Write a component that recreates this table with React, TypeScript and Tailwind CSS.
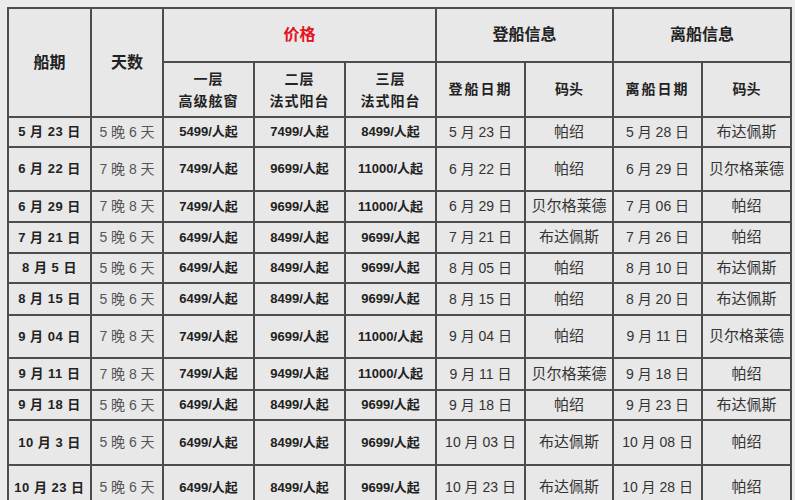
const rows = [
  { h: 30, date: '5 月 23 日', days: '5 晚 6 天', p1: '5499/人起', p2: '7499/人起', p3: '8499/人起', on: '5 月 23 日', onPort: '帕绍', off: '5 月 28 日', offPort: '布达佩斯' },
  { h: 44, date: '6 月 22 日', days: '7 晚 8 天', p1: '7499/人起', p2: '9699/人起', p3: '11000/人起', on: '6 月 22 日', onPort: '帕绍', off: '6 月 29 日', offPort: '贝尔格莱德' },
  { h: 31, date: '6 月 29 日', days: '7 晚 8 天', p1: '7499/人起', p2: '9699/人起', p3: '11000/人起', on: '6 月 29 日', onPort: '贝尔格莱德', off: '7 月 06 日', offPort: '帕绍' },
  { h: 31, date: '7 月 21 日', days: '5 晚 6 天', p1: '6499/人起', p2: '8499/人起', p3: '9699/人起', on: '7 月 21 日', onPort: '布达佩斯', off: '7 月 26 日', offPort: '帕绍' },
  { h: 30, date: '8 月 5 日', days: '5 晚 6 天', p1: '6499/人起', p2: '8499/人起', p3: '9699/人起', on: '8 月 05 日', onPort: '帕绍', off: '8 月 10 日', offPort: '布达佩斯' },
  { h: 32, date: '8 月 15 日', days: '5 晚 6 天', p1: '6499/人起', p2: '8499/人起', p3: '9699/人起', on: '8 月 15 日', onPort: '帕绍', off: '8 月 20 日', offPort: '布达佩斯' },
  { h: 43, date: '9 月 04 日', days: '7 晚 8 天', p1: '7499/人起', p2: '9699/人起', p3: '11000/人起', on: '9 月 04 日', onPort: '帕绍', off: '9 月 11 日', offPort: '贝尔格莱德' },
  { h: 32, date: '9 月 11 日', days: '7 晚 8 天', p1: '7499/人起', p2: '9499/人起', p3: '11000/人起', on: '9 月 11 日', onPort: '贝尔格莱德', off: '9 月 18 日', offPort: '帕绍' },
  { h: 30, date: '9 月 18 日', days: '5 晚 6 天', p1: '6499/人起', p2: '8499/人起', p3: '9699/人起', on: '9 月 18 日', onPort: '帕绍', off: '9 月 23 日', offPort: '布达佩斯' },
  { h: 45, date: '10 月 3 日', days: '5 晚 6 天', p1: '6499/人起', p2: '8499/人起', p3: '9699/人起', on: '10 月 03 日', onPort: '布达佩斯', off: '10 月 08 日', offPort: '帕绍' },
  { h: 45, date: '10 月 23 日', days: '5 晚 6 天', p1: '6499/人起', p2: '8499/人起', p3: '9699/人起', on: '10 月 23 日', onPort: '布达佩斯', off: '10 月 28 日', offPort: '帕绍' },
];

const cell = 'border-2 border-[#4d4d4d] text-center align-middle p-0';
const font = { fontFamily: '"Liberation Sans", "Noto Sans CJK SC", sans-serif' };

export default function App() {
  return (
    <div className="w-[795px] h-[500px] overflow-hidden bg-[#ebebeb] pl-[7px] pt-[7px]" style={font}>
      <table className="table-fixed border-collapse bg-[#e8e8e8] w-[783px] text-[#222]">
        <colgroup>
          <col className="w-[83px]" />
          <col className="w-[72px]" />
          <col className="w-[91px]" />
          <col className="w-[91px]" />
          <col className="w-[91px]" />
          <col className="w-[89px]" />
          <col className="w-[88px]" />
          <col className="w-[89px]" />
          <col className="w-[89px]" />
        </colgroup>
        <thead>
          <tr className="h-[54px]">
            <th rowSpan={2} className={`${cell} text-[16px] font-bold`}>船期</th>
            <th rowSpan={2} className={`${cell} text-[16px] font-bold`}>天数</th>
            <th colSpan={3} className={`${cell} text-[16px] font-bold text-[#e3141f]`}>价格</th>
            <th colSpan={2} className={`${cell} text-[16px] font-bold`}>登船信息</th>
            <th colSpan={2} className={`${cell} text-[16px] font-bold`}>离船信息</th>
          </tr>
          <tr className="h-[55px]">
            <th className={`${cell} text-[14px] font-bold leading-[22px] tracking-[1px]`}>一层<br />高级舷窗</th>
            <th className={`${cell} text-[14px] font-bold leading-[22px] tracking-[1px]`}>二层<br />法式阳台</th>
            <th className={`${cell} text-[14px] font-bold leading-[22px] tracking-[1px]`}>三层<br />法式阳台</th>
            <th className={`${cell} text-[14px] font-bold tracking-[2px]`}>登船日期</th>
            <th className={`${cell} text-[14px] font-bold`}>码头</th>
            <th className={`${cell} text-[14px] font-bold tracking-[2px]`}>离船日期</th>
            <th className={`${cell} text-[14px] font-bold`}>码头</th>
          </tr>
        </thead>
        <tbody>
          {rows.map((r, i) => (
            <tr key={i} style={{ height: r.h }}>
              <td className={`${cell} text-[13px] font-bold whitespace-nowrap tracking-[0.5px]`}>{r.date}</td>
              <td className={`${cell} text-[14px] text-[#555] whitespace-nowrap`}>{r.days}</td>
              <td className={`${cell} text-[13px] font-bold`}>{r.p1}</td>
              <td className={`${cell} text-[13px] font-bold`}>{r.p2}</td>
              <td className={`${cell} text-[13px] font-bold`}>{r.p3}</td>
              <td className={`${cell} text-[14px] text-[#333] whitespace-nowrap`}>{r.on}</td>
              <td className={`${cell} text-[15px] text-[#333]`}>{r.onPort}</td>
              <td className={`${cell} text-[14px] text-[#333] whitespace-nowrap`}>{r.off}</td>
              <td className={`${cell} text-[15px] text-[#333]`}>{r.offPort}</td>
            </tr>
          ))}
        </tbody>
      </table>
    </div>
  );
}
